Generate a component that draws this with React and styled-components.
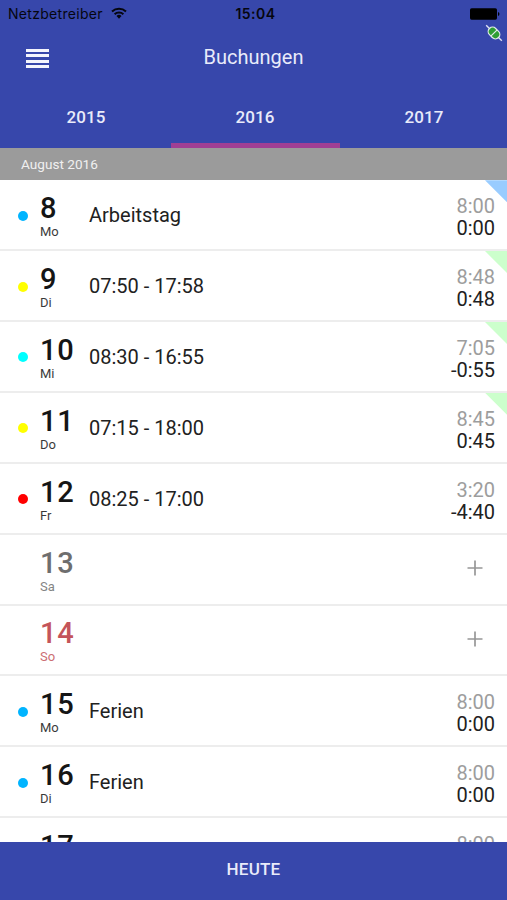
import React from "react"
import styled, { createGlobalStyle } from "styled-components"

const days = [
  { day: 8, name: "Mo", dot: "#00b4ff", text: "Arbeitstag", total: "8:00", diff: "0:00", corner: "#99ccff" },
  { day: 9, name: "Di", dot: "#ffff00", text: "07:50 - 17:58", total: "8:48", diff: "0:48", corner: "#ccffcc" },
  { day: 10, name: "Mi", dot: "#00ffff", text: "08:30 - 16:55", total: "7:05", diff: "-0:55", corner: "#ccffcc" },
  { day: 11, name: "Do", dot: "#ffff00", text: "07:15 - 18:00", total: "8:45", diff: "0:45", corner: "#ccffcc" },
  { day: 12, name: "Fr", dot: "#ff0000", text: "08:25 - 17:00", total: "3:20", diff: "-4:40" },
  { day: 13, name: "Sa", color: "#6e6e6e" },
  { day: 14, name: "So", color: "#c4545a" },
  { day: 15, name: "Mo", dot: "#00b4ff", text: "Ferien", total: "8:00", diff: "0:00" },
  { day: 16, name: "Di", dot: "#00b4ff", text: "Ferien", total: "8:00", diff: "0:00" },
  { day: 17, total: "8:00" },
]

const years = ["2015", "2016", "2017"]

const WifiIcon = () => (
  <svg width="16" height="12" viewBox="0 0 16 12" fill="none" stroke="#05060f">
    <path d="M1 4.4a10.3 10.3 0 0 1 14 0" strokeWidth="2" />
    <path d="M3.6 7.2a6.4 6.4 0 0 1 8.8 0" strokeWidth="1.9" />
    <path d="M8 11.7 5.5 9a3.7 3.7 0 0 1 5 0z" fill="#05060f" stroke="none" />
  </svg>
)

const BatteryIcon = () => (
  <svg width="30" height="12" viewBox="0 0 30 12" fill="#000">
    <rect x="0" y="0.3" width="27" height="11.4" rx="1.6" />
    <path d="M28 4a2.1 2.1 0 0 1 0 4z" />
  </svg>
)

const PlugIcon = () => (
  <svg width="18" height="18" viewBox="0 0 18 18">
    <path d="M1.2 1.2 16.8 16.8" stroke="#dfe2f4" strokeWidth="1.4" />
    <g transform="rotate(45 9 9)">
      <rect x="2" y="4" width="14" height="10" rx="5" fill="#e4ecec" />
      <path d="M8.4 5.2v7.6H7a3.8 3.8 0 0 1 0-7.6z" fill="#2f9e35" />
      <path d="M9.6 5.2v7.6H11a3.8 3.8 0 0 0 0-7.6z" fill="#2f9e35" />
    </g>
  </svg>
)

const App = () => (
  <Screen>
    <GlobalStyle />
    <Header>
      <StatusBar>
        <Carrier>
          <span>Netzbetreiber</span>
          <WifiIcon />
        </Carrier>
        <Clock>15:04</Clock>
        <Battery>
          <BatteryIcon />
        </Battery>
      </StatusBar>
      <TitleBar>
        <MenuButton aria-label="Menü">
          <i />
          <i />
          <i />
          <i />
        </MenuButton>
        <Title>Buchungen</Title>
        <Connection>
          <PlugIcon />
        </Connection>
      </TitleBar>
      <Tabs>
        {years.map(year => (
          <Tab key={year} $active={year === "2016"}>
            {year}
          </Tab>
        ))}
      </Tabs>
    </Header>
    <MonthBar>August 2016</MonthBar>
    <List>
      {days.map(item => (
        <Row key={item.day}>
          <Dot $color={item.dot} />
          <DateColumn $color={item.color}>
            <strong>{item.day}</strong>
            <span>{item.name}</span>
          </DateColumn>
          <Entry>{item.text}</Entry>
          {item.total ? (
            <Hours>
              <span>{item.total}</span>
              <b>{item.diff}</b>
            </Hours>
          ) : (
            <AddButton aria-label="Neu">
              <svg width="16" height="16" viewBox="0 0 16 16">
                <path d="M8 .5v15M.5 8h15" stroke="#979797" strokeWidth="1.7" />
              </svg>
            </AddButton>
          )}
          {item.corner && <Corner $color={item.corner} />}
        </Row>
      ))}
    </List>
    <Footer>HEUTE</Footer>
  </Screen>
)

const GlobalStyle = createGlobalStyle`
  * {
    box-sizing: border-box;
  }

  body {
    margin: 0;
    overflow: hidden;
  }

  button {
    padding: 0;
    border: 0;
    background: none;
    font: inherit;
  }
`

const Screen = styled.div`
  display: flex;
  flex-direction: column;
  width: 507px;
  height: 900px;
  overflow: hidden;
  background: #fff;
  color: #212121;
  font-family: Roboto, sans-serif;
`

const Header = styled.header`
  flex: none;
  height: 147.5px;
  background: #3747ab;
  color: #e9ebfa;
`

const StatusBar = styled.div`
  display: grid;
  grid-template-columns: 1fr auto 1fr;
  align-items: center;
  height: 27px;
  padding: 0 7px 0 8px;
  color: #05060f;
  font-family: Inter, sans-serif;
  font-size: 14px;
`

const Carrier = styled.div`
  display: flex;
  align-items: center;
  gap: 8px;
  letter-spacing: 0.3px;

  svg {
    margin-top: -1px;
  }
`

const Clock = styled.div`
  padding-left: 3px;
  font-weight: 600;
  letter-spacing: 0.5px;
`

const Battery = styled.div`
  display: flex;
  justify-content: flex-end;
`

const TitleBar = styled.div`
  position: relative;
  display: grid;
  grid-template-columns: 1fr auto 1fr;
  align-items: center;
  height: 60px;
`

const MenuButton = styled.button`
  display: flex;
  flex-direction: column;
  gap: 2.1px;
  width: 23px;
  margin: 3px 0 0 26px;

  i {
    height: 3px;
    background: #f4f5fd;
  }
`

const Title = styled.h1`
  margin: 0;
  font-size: 20px;
  font-weight: 400;
`

const Connection = styled.div`
  position: absolute;
  top: -3px;
  right: 4px;
  line-height: 0;
`

const Tabs = styled.nav`
  display: grid;
  grid-template-columns: repeat(3, 1fr);
  height: 60.5px;
  margin: 0 -1.5px 0 1.5px;
`

const Tab = styled.button`
  padding-top: 4px;
  border-bottom: 5px solid ${props => (props.$active ? "#a03f94" : "transparent")};
  color: #e9ebfa;
  font-size: 17px;
  font-weight: 500;
  letter-spacing: 0.1px;
`

const MonthBar = styled.div`
  flex: none;
  height: 32.7px;
  padding-left: 21px;
  background: #9b9b9b;
  color: #f0f0f0;
  font-size: 13.6px;
  line-height: 32px;
`

const List = styled.main`
  flex: 1;
  min-height: 0;
  overflow: hidden;
`

const Row = styled.div`
  position: relative;
  display: flex;
  align-items: center;
  height: 70.9px;
  padding: 0 12px 0 18px;
  border-bottom: 2px solid #ededed;
`

const Dot = styled.i`
  flex: none;
  width: 10px;
  height: 10px;
  margin-top: 2px;
  border-radius: 50%;
  background: ${props => props.$color || "transparent"};
`

const DateColumn = styled.div`
  display: flex;
  flex-direction: column;
  flex: none;
  width: 49px;
  margin: 3px 0 0 12px;
  color: ${props => props.$color || "#151515"};

  strong {
    font-size: 29px;
    font-weight: 500;
    letter-spacing: 0.8px;
    line-height: 32px;
  }

  span {
    height: 16px;
    font-size: 13px;
    line-height: 16px;
    opacity: 0.85;
  }
`

const Entry = styled.div`
  flex: 1;
  padding-top: 1px;
  font-size: 20px;
`

const Hours = styled.div`
  display: flex;
  flex-direction: column;
  align-items: flex-end;
  margin-top: 5px;
  font-size: 20px;
  line-height: 22px;

  span {
    color: #9d9d9d;
  }

  b {
    height: 22px;
    font-weight: 400;
  }
`

const AddButton = styled.button`
  width: 16px;
  height: 16px;
  margin: -2px 12px 0 0;
  line-height: 0;
`

const Corner = styled.i`
  position: absolute;
  top: 0;
  right: 0;
  width: 22px;
  height: 22px;
  background: ${props => props.$color};
  clip-path: polygon(0 0, 100% 0, 100% 100%);
`

const Footer = styled.button`
  flex: none;
  height: 58.5px;
  padding-bottom: 3px;
  background: #3747ab;
  color: #e9ebfa;
  font-size: 17px;
  font-weight: 500;
  letter-spacing: 0.2px;
`

export default App
